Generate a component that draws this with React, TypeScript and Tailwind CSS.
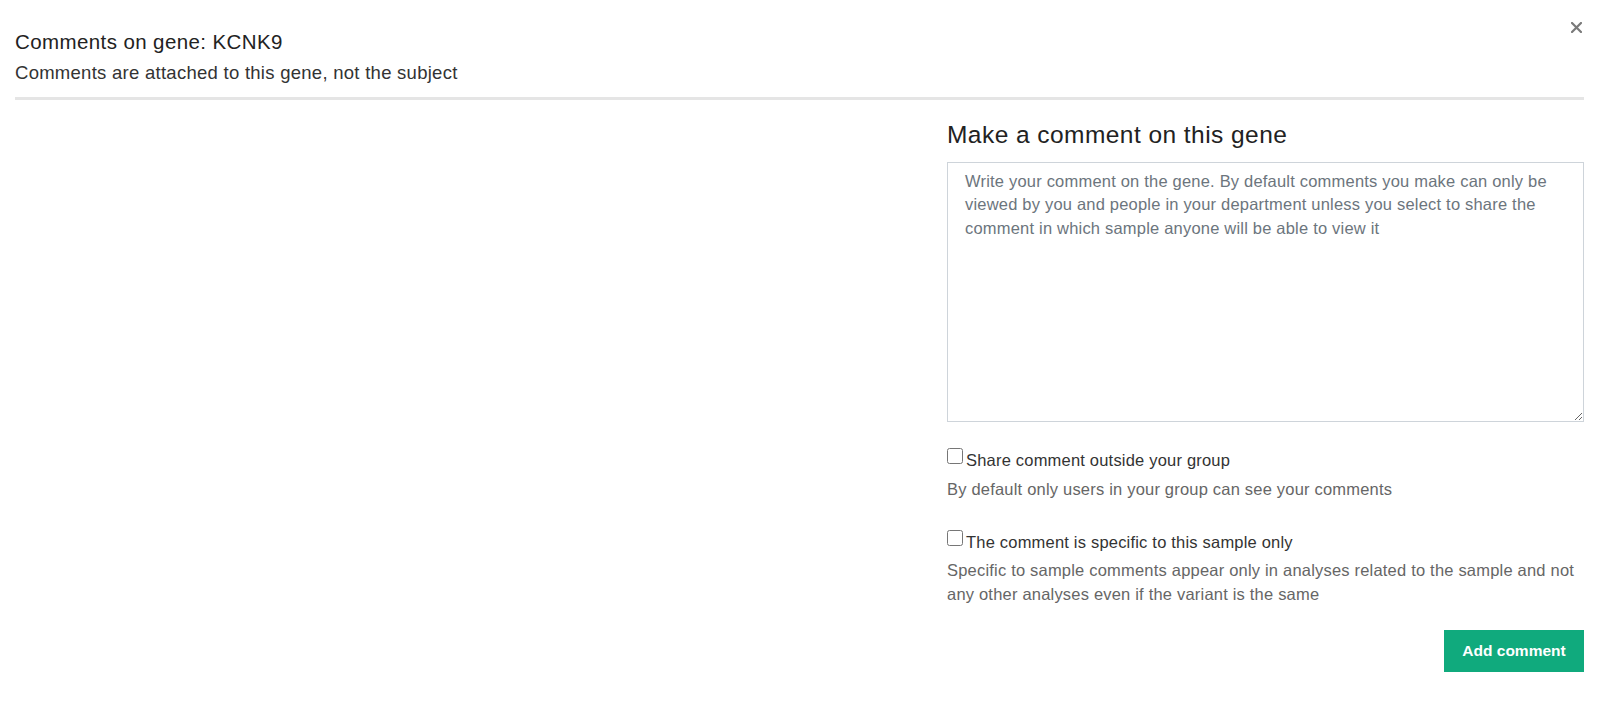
import { useState } from "react";

function CloseIcon() {
  return (
    <svg width="11" height="11" viewBox="0 0 11 11" fill="none">
      <path d="M1 1L10 10M10 1L1 10" stroke="#7a7a7a" strokeWidth="2.2" strokeLinecap="square" />
    </svg>
  );
}

function CheckRow({ label, help, checked, onChange, helpGap }: { label: string; help: string; checked: boolean; onChange: (v: boolean) => void; helpGap: string }) {
  return (
    <div>
      <label className="flex items-start gap-[3px] cursor-pointer">
        <input
          type="checkbox"
          checked={checked}
          onChange={(e) => onChange(e.target.checked)}
          className="w-4 h-4 m-0 shrink-0"
        />
        <span className="text-[16.5px] leading-[24px] tracking-[0.2px] text-[#333]">{label}</span>
      </label>
      <p className={`${helpGap} text-[16.5px] leading-[24px] tracking-[0.2px] text-[#666]`}>{help}</p>
    </div>
  );
}

export default function App() {
  const [text, setText] = useState("");
  const [share, setShare] = useState(false);
  const [sampleOnly, setSampleOnly] = useState(false);

  return (
    <div className="min-h-[704px] bg-white pl-[15px] pr-[16px] font-['Liberation_Sans',Arial,sans-serif]">
      <div className="flex items-start justify-between pt-[22px]">
        <div className="pt-[6px]">
          <h4 className="text-[20.5px] leading-[28px] tracking-[0.4px] text-[#222]">Comments on gene: KCNK9</h4>
          <p className="mt-[5px] text-[18.5px] leading-[24px] tracking-[0.27px] text-[#333]">
            Comments are attached to this gene, not the subject
          </p>
        </div>
        <button className="mr-[2px] p-0 leading-none" aria-label="Close">
          <CloseIcon />
        </button>
      </div>

      <div className="mt-[12px] h-[3px] bg-[#e5e5e5]" />

      <div className="flex">
        <div className="flex-1" />
        <div className="w-[637px] shrink-0">
          <h3 className="mt-[21px] text-[24.5px] leading-[28px] tracking-[0.45px] text-[#222]">Make a comment on this gene</h3>
          <textarea
            value={text}
            onChange={(e) => setText(e.target.value)}
            placeholder="Write your comment on the gene. By default comments you make can only be viewed by you and people in your department unless you select to share the comment in which sample anyone will be able to view it"
            className="mt-[13px] block w-full h-[260px] border border-[#ced4da] pl-[17px] pr-[16px] pt-[7px] text-[16.5px] leading-[23.3px] tracking-[0.2px] text-[#333] placeholder:text-[#6c757d] outline-none"
          />

          <div className="mt-[26px]">
            <CheckRow
              label="Share comment outside your group"
              help="By default only users in your group can see your comments"
              checked={share}
              onChange={setShare}
              helpGap="mt-[5px]"
            />
          </div>
          <div className="mt-[29px]">
            <CheckRow
              label="The comment is specific to this sample only"
              help="Specific to sample comments appear only in analyses related to the sample and not any other analyses even if the variant is the same"
              checked={sampleOnly}
              onChange={setSampleOnly}
              helpGap="mt-[4px]"
            />
          </div>

          <div className="mt-[24px] flex justify-end">
            <button className="w-[140px] h-[42px] bg-[#10aa7d] text-white text-[15.5px] font-bold">Add comment</button>
          </div>
        </div>
      </div>
    </div>
  );
}
